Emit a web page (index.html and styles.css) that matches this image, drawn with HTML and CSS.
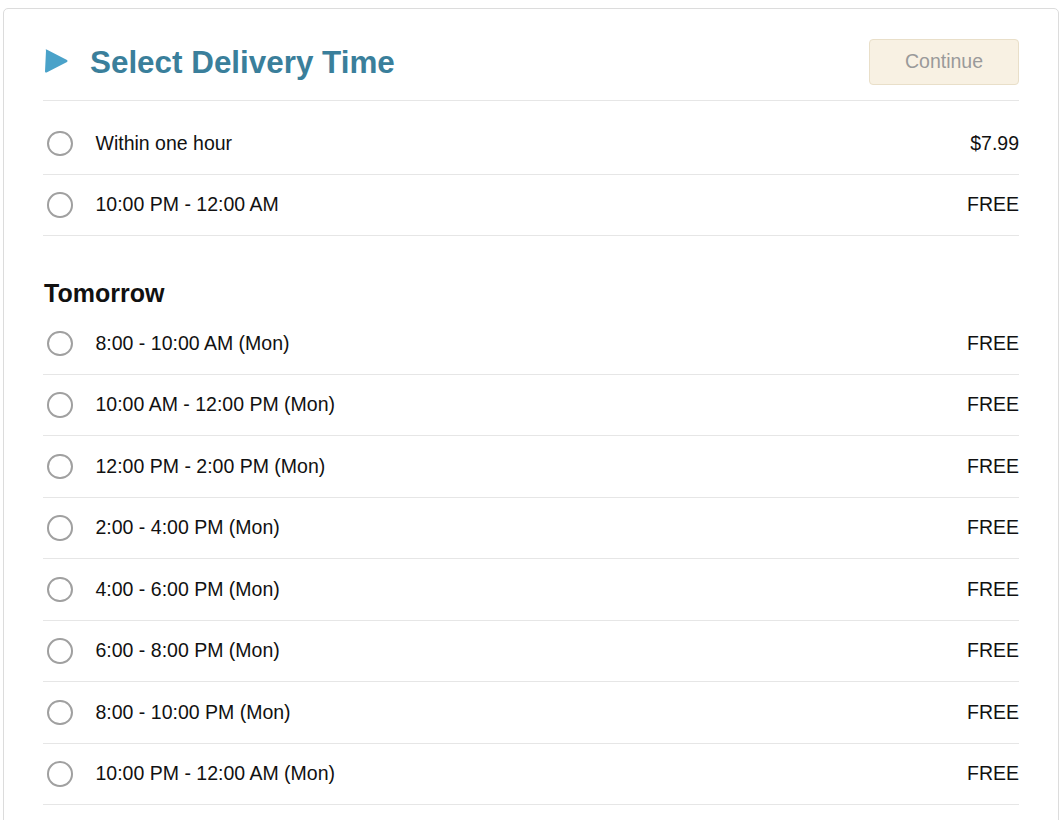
FILE: index.html
```html
<!DOCTYPE html>
<html lang="en">
<head>
<meta charset="utf-8">
<title>Select Delivery Time</title>
<link rel="stylesheet" href="styles.css">
</head>
<body>
<div class="card">
  <div class="header">
    <div class="title-wrap">
      <svg class="tri" width="25" height="26" viewBox="0 0 25 26"><path d="M2 2.5 Q1 1 2.6 1.6 L23 12 Q24.2 13 23 14 L2.6 24.4 Q1 25 1 23.5 Z" fill="#4aa2c9"/></svg>
      <h1 class="title">Select Delivery Time</h1>
    </div>
    <button class="continue" disabled>Continue</button>
  </div>
  <ul class="slots first">
    <li class="slot"><span class="radio"></span><span class="label">Within one hour</span><span class="price">$7.99</span></li>
    <li class="slot"><span class="radio"></span><span class="label">10:00 PM - 12:00 AM</span><span class="price">FREE</span></li>
  </ul>
  <h2 class="day">Tomorrow</h2>
  <ul class="slots">
    <li class="slot"><span class="radio"></span><span class="label">8:00 - 10:00 AM (Mon)</span><span class="price">FREE</span></li>
    <li class="slot"><span class="radio"></span><span class="label">10:00 AM - 12:00 PM (Mon)</span><span class="price">FREE</span></li>
    <li class="slot"><span class="radio"></span><span class="label">12:00 PM - 2:00 PM (Mon)</span><span class="price">FREE</span></li>
    <li class="slot"><span class="radio"></span><span class="label">2:00 - 4:00 PM (Mon)</span><span class="price">FREE</span></li>
    <li class="slot"><span class="radio"></span><span class="label">4:00 - 6:00 PM (Mon)</span><span class="price">FREE</span></li>
    <li class="slot"><span class="radio"></span><span class="label">6:00 - 8:00 PM (Mon)</span><span class="price">FREE</span></li>
    <li class="slot"><span class="radio"></span><span class="label">8:00 - 10:00 PM (Mon)</span><span class="price">FREE</span></li>
    <li class="slot"><span class="radio"></span><span class="label">10:00 PM - 12:00 AM (Mon)</span><span class="price">FREE</span></li>
  </ul>
</div>
</body>
</html>
```
FILE: styles.css
```css
html, body {
  margin: 0;
  background: #fff;
}
body {
  padding: 8px 4px 0 3px;
  font-family: "Liberation Sans", Arial, sans-serif;
  color: #111;
}
.card {
  border: 1px solid #dcdcdc;
  border-radius: 5px;
  padding: 30px 39px 40px 39px;
  min-height: 900px;
}
.header {
  display: flex;
  align-items: center;
  justify-content: space-between;
  padding-bottom: 15px;
  border-bottom: 1px solid #e6e6e6;
}
.title-wrap {
  display: flex;
  align-items: center;
  gap: 21px;
  padding-left: 1px;
}
.tri {
  display: block;
  margin-top: -3px;
}
.title {
  margin: 0;
  font-size: 31.4px;
  font-weight: bold;
  color: #3a7f9b;
  line-height: 40px;
  position: relative;
  top: 1px;
}
.continue {
  width: 150px;
  height: 46px;
  background: #f8f1e3;
  border: 1px solid #e9dfc9;
  border-radius: 4px;
  color: #9a9a9a;
  font-family: "Liberation Sans", Arial, sans-serif;
  font-size: 19.5px;
  padding: 0 0 2px 0;
}
.slots {
  list-style: none;
  margin: 0;
  padding: 0;
}
.slots.first {
  padding-top: 12.5px;
}
.slot {
  display: flex;
  align-items: center;
  height: 60.5px;
  border-bottom: 1px solid #e6e6e6;
  font-size: 19.5px;
}
.slots.first .slot:first-child {
  height: 60px;
}
.radio {
  width: 21.5px;
  height: 21.5px;
  border: 2px solid #a0a0a0;
  border-radius: 50%;
  margin-left: 4px;
  margin-right: 23px;
  flex: none;
}
.label {
  flex: 1;
}
.price {
  text-align: right;
}
.day {
  margin: 42px 0 5px 1px;
  font-size: 25px;
  line-height: 30px;
  font-weight: bold;
  color: #111;
}
```
